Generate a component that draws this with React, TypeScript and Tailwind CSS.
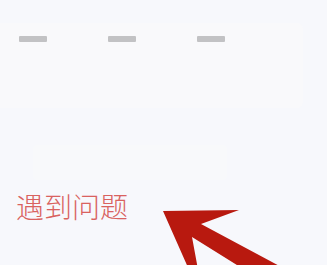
export default function App() {
  return (
    <div className="relative w-[327px] h-[265px] overflow-hidden bg-[#f7f8fc]" style={{ fontFamily: '"Noto Sans CJK SC", "Noto Sans", sans-serif' }}>
      {/* card with placeholder dashes */}
      <div className="mt-[23px] w-[303px] h-[85px] bg-[#f9f9fb] rounded-r-md pt-[13px] pl-[19px] flex gap-[61px]">
        <div className="w-[28px] h-[6px] bg-[#c2c2c4] rounded-[1px]" />
        <div className="w-[28px] h-[6px] bg-[#c2c2c4] rounded-[1px]" />
        <div className="w-[28px] h-[6px] bg-[#c2c2c4] rounded-[1px]" />
      </div>

      <div className="mt-[37px] ml-[33px] w-[194px] h-[35px] bg-[#f8f9fb] rounded" />

      <div className="mt-[8px] pl-[16px] text-[28px] font-light leading-[36px] text-[#d9625f]">遇到问题</div>

      {/* annotation arrow */}
      <svg className="absolute inset-0" width="327" height="265" viewBox="0 0 327 265">
        <polygon
          points="163,211 239,210 201,224 300,277 285,295 192,237 199,275 190,272"
          fill="#b8190f"
        />
      </svg>
    </div>
  )
}
